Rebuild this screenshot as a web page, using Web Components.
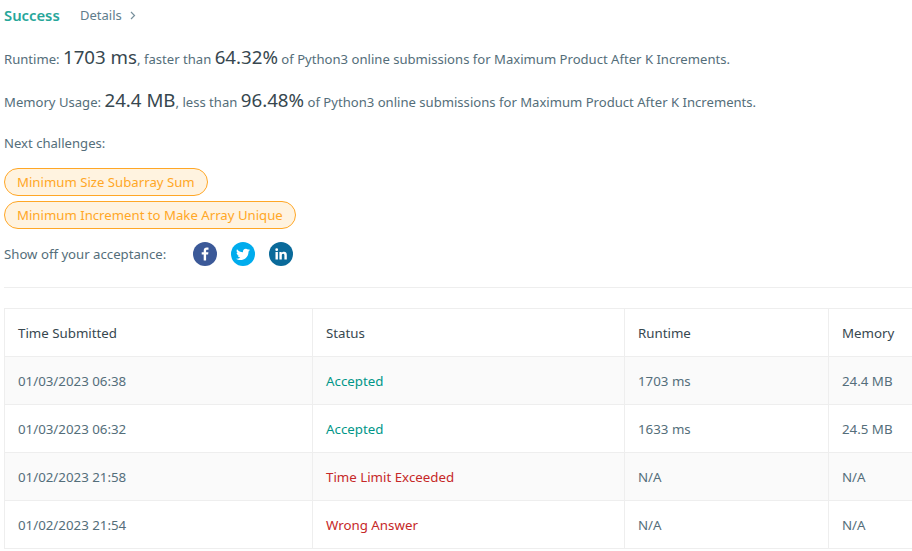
<!DOCTYPE html>
<html>
<head>
<meta charset="utf-8">
<title>Submission result</title>
<style>
    html, body {
        margin: 0;
        height: 100%;
        overflow: hidden;
        background: #fff;
        font-family: "Noto Sans", "Open Sans", sans-serif;
        font-size: 13.1px;
        color: #546e7a;
    }
</style>
</head>
<body>
<submission-page>
    <result-header></result-header>
    <stat-line label="Runtime:" value="1703 ms" cmp="faster than" pct="64.32%"></stat-line>
    <stat-line label="Memory Usage:" value="24.4 MB" cmp="less than" pct="96.48%"></stat-line>
    <next-challenges>
        <challenge-pill>Minimum Size Subarray Sum</challenge-pill>
        <challenge-pill>Minimum Increment to Make Array Unique</challenge-pill>
    </next-challenges>
    <share-row></share-row>
    <submission-table>
        <submission-row head time="Time Submitted" status="Status" runtime="Runtime" memory="Memory"></submission-row>
        <submission-row shaded time="01/03/2023 06:38" status="Accepted" kind="ok" runtime="1703 ms" memory="24.4 MB"></submission-row>
        <submission-row time="01/03/2023 06:32" status="Accepted" kind="ok" runtime="1633 ms" memory="24.5 MB"></submission-row>
        <submission-row shaded time="01/02/2023 21:58" status="Time Limit Exceeded" kind="bad" runtime="N/A" memory="N/A"></submission-row>
        <submission-row time="01/02/2023 21:54" status="Wrong Answer" kind="bad" runtime="N/A" memory="N/A"></submission-row>
    </submission-table>
</submission-page>

<script>
class SubmissionPage extends HTMLElement {
    constructor() {
        super();
        this.attachShadow({mode: "open"}).innerHTML = `
            <style>
                :host { display: block; padding: 0 0 0 4px; width: 908px; }
            </style>
            <slot></slot>
        `;
    }
}

class ResultHeader extends HTMLElement {
    constructor() {
        super();
        this.attachShadow({mode: "open"}).innerHTML = `
            <style>
                :host { display: flex; align-items: center; height: 30px; }
                .state { color: #26a69a; font-weight: 600; font-size: 14.8px; width: 76px; }
                .details { color: #607d8b; font-size: 13px; }
                svg { margin-left: 8px; }
            </style>
            <span class="state">Success</span>
            <span class="details">Details</span>
            <svg width="6" height="9" viewBox="0 0 6 9"><path d="M1 1l3.500 3.500L1 8" fill="none" stroke="#78909c" stroke-width="1.200"/></svg>
        `;
    }
}

class StatLine extends HTMLElement {
    connectedCallback() {
        const a = (n) => this.getAttribute(n);
        this.attachShadow({mode: "open"}).innerHTML = `
            <style>
                :host { display: block; height: 43px; line-height: 53px; white-space: nowrap; }
                b { font-weight: 400; font-size: 18.7px; color: #37474f; }
            </style>
            ${a("label")} <b>${a("value")}</b>, ${a("cmp")} <b>${a("pct")}</b> of Python3 online submissions for Maximum Product After K Increments.
        `;
    }
}

class NextChallenges extends HTMLElement {
    constructor() {
        super();
        this.attachShadow({mode: "open"}).innerHTML = `
            <style>
                :host { display: flex; flex-direction: column; align-items: flex-start; row-gap: 5px; padding-top: 17px; }
                .title { line-height: 20px; margin-bottom: 10px; }
            </style>
            <div class="title">Next challenges:</div>
            <slot></slot>
        `;
    }
}

class ChallengePill extends HTMLElement {
    constructor() {
        super();
        this.attachShadow({mode: "open"}).innerHTML = `
            <style>
                :host {
                    display: block;
                    box-sizing: border-box;
                    height: 28px;
                    line-height: 26px;
                    padding: 0 12px;
                    border: 1px solid #ffa726;
                    border-radius: 14px;
                    background-color: #fff3e0;
                    color: #ffa726;
                    font-size: 13.2px;
                }
            </style>
            <slot></slot>
        `;
    }
}

class ShareRow extends HTMLElement {
    constructor() {
        super();
        this.attachShadow({mode: "open"}).innerHTML = `
            <style>
                :host { display: flex; align-items: center; height: 50px; border-bottom: 1px solid #eeeeee; padding-bottom: 8px; margin-bottom: 20px; font-size: 13.2px; }
                .label { width: 189px; }
                .icons { display: flex; column-gap: 14px; }
                svg { display: block; }
            </style>
            <span class="label">Show off your acceptance:</span>
            <div class="icons">
                <svg width="24" height="24" viewBox="0 0 24 24"><circle cx="12" cy="12" r="12" fill="#3b5998"/><path d="M13.100 18.500v-5.900h2l.3-2.300h-2.300V8.900c0-.7.2-1.100 1.100-1.100h1.300V5.700c-.2 0-1-.1-1.800-.1-1.800 0-3 1.100-3 3.100v1.600H8.700v2.300h2v5.900z" fill="#fff"/></svg>
                <svg width="24" height="24" viewBox="0 0 24 24"><circle cx="12" cy="12" r="12" fill="#00aced"/><path d="M19 8c-.5.2-1.100.4-1.600.5.6-.4 1-.9 1.300-1.600-.5.3-1.100.6-1.800.7a2.900 2.900 0 0 0-4.900 2.600C9.600 10.100 7.500 9 6 7.200c-.8 1.300-.4 3 .9 3.900-.5 0-.9-.1-1.300-.4 0 1.400 1 2.600 2.300 2.900-.4.100-.9.100-1.300 0 .4 1.200 1.500 2 2.700 2-1.200 1-2.800 1.400-4.300 1.200 1.300.8 2.800 1.300 4.400 1.300 5.300 0 8.300-4.500 8.100-8.500.6-.4 1.100-1 1.500-1.600z" fill="#fff"/></svg>
                <svg width="24" height="24" viewBox="0 0 24 24"><circle cx="12" cy="12" r="12" fill="#0a6a9a"/><path d="M6.500 10h2.400v7.500H6.500zM7.700 6.300a1.400 1.400 0 1 1 0 2.800 1.400 1.400 0 0 1 0-2.800zM10.400 10h2.300v1c.4-.7 1.200-1.200 2.300-1.200 2.300 0 2.800 1.500 2.800 3.500v4.200h-2.400v-3.700c0-.9 0-2-1.200-2s-1.400.9-1.400 1.900v3.800h-2.400z" fill="#fff"/></svg>
            </div>
        `;
    }
}

class SubmissionTable extends HTMLElement {
    constructor() {
        super();
        this.attachShadow({mode: "open"}).innerHTML = `
            <style>
                :host { display: block; border-top: 1px solid #eeeeee; overflow: hidden; font-size: 13.3px; }
            </style>
            <slot></slot>
        `;
    }
}

class SubmissionRow extends HTMLElement {
    connectedCallback() {
        const a = (n) => this.getAttribute(n);
        const colors = {ok: "#009688", bad: "#c62828"};
        const head = this.hasAttribute("head");
        this.attachShadow({mode: "open"}).innerHTML = `
            <style>
                :host {
                    display: grid;
                    grid-template-columns: 308px 312px 204px 1fr;
                    height: 48px;
                    box-sizing: border-box;
                    border-bottom: 1px solid #eeeeee;
                    background-color: ${this.hasAttribute("shaded") ? "#fafafa" : "#fff"};
                    color: ${head ? "#37474f" : "#546e7a"};
                }
                div {
                    box-sizing: border-box;
                    border-left: 1px solid #eeeeee;
                    padding-left: 13px;
                    line-height: 49px;
                    white-space: nowrap;
                }
                .status { color: ${colors[a("kind")] || "inherit"}; }
            </style>
            <div>${a("time")}</div>
            <div class="status">${a("status")}</div>
            <div>${a("runtime")}</div>
            <div>${a("memory")}</div>
        `;
    }
}

customElements.define("submission-page", SubmissionPage);
customElements.define("result-header", ResultHeader);
customElements.define("stat-line", StatLine);
customElements.define("next-challenges", NextChallenges);
customElements.define("challenge-pill", ChallengePill);
customElements.define("share-row", ShareRow);
customElements.define("submission-table", SubmissionTable);
customElements.define("submission-row", SubmissionRow);
</script>
</body>
</html>
